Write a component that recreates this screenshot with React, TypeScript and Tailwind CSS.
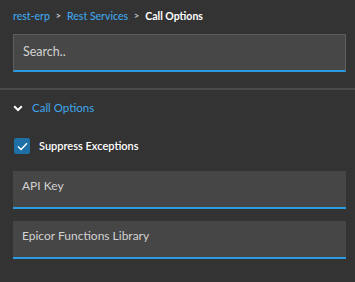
export default function App() {
  const font = { fontFamily: 'Lato, "Noto Sans", sans-serif' };
  return (
    <div className="h-[282px] w-[355px] overflow-hidden bg-[#333333]" style={font}>
      {/* breadcrumb */}
      <div className="flex items-center gap-[6px] px-[13px] pt-[8px] text-[10.5px] leading-[16px]">
        <span className="font-medium text-[#3fa6ec]">rest-erp</span>
        <span className="text-[9px] font-bold text-[#c8c8c8]">&gt;</span>
        <span className="font-medium text-[#3fa6ec]">Rest Services</span>
        <span className="text-[9px] font-bold text-[#c8c8c8]">&gt;</span>
        <span className="font-bold text-white">Call Options</span>
      </div>

      {/* search */}
      <div className="ml-[13px] mt-[10px] flex h-[38px] w-[333px] items-center border border-b-2 border-[#5e5e5e] border-b-[#2a9be0] bg-[#474747] px-[9px]">
        <span className="text-[12.5px] text-[#d2d2d2]">Search..</span>
      </div>

      <div className="mt-[16px] h-[2px] w-full bg-[#4a4a4a]" />

      {/* section header */}
      <div className="mt-[10px] flex h-[16px] items-center gap-[9px] px-[13px]">
        <svg width="10" height="7" viewBox="0 0 10 7" fill="none">
          <path d="M1.2 1.2 L5 5 L8.8 1.2" stroke="#ffffff" strokeWidth="2" />
        </svg>
        <span className="text-[11.5px] leading-[16px] text-[#3fa6ec]">Call Options</span>
      </div>

      {/* checkbox */}
      <div className="mt-[22px] flex items-center gap-[9px] pl-[14px]">
        <div className="flex h-[16px] w-[16px] items-center justify-center rounded-[2px] bg-[#1d6fa5]">
          <svg width="11" height="9" viewBox="0 0 11 9" fill="none">
            <path d="M1 4.6 L4 7.4 L10 1.2" stroke="#ffffff" strokeWidth="1.4" />
          </svg>
        </div>
        <span className="text-[11px] font-semibold text-white">Suppress Exceptions</span>
      </div>

      {/* fields */}
      <div className="ml-[13px] mt-[16px] flex w-[333px] flex-col gap-[12px]">
        {["API Key", "Epicor Functions Library"].map((label) => (
          <div
            key={label}
            className="h-[38px] border-b-2 border-[#2a9be0] bg-[#464646] px-[9px] pt-[6px] text-[12px] leading-[18px] text-[#d2d2d2]"
          >
            {label}
          </div>
        ))}
      </div>
    </div>
  );
}
